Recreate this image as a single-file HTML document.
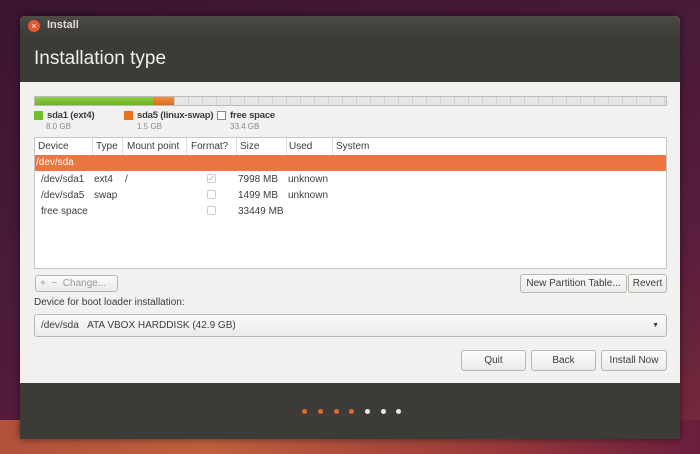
<!DOCTYPE html>
<html><head><style>
*{margin:0;padding:0;box-sizing:border-box}
body{width:700px;height:454px;overflow:hidden;position:relative;font-family:"Liberation Sans","DejaVu Sans",sans-serif;
background:linear-gradient(160deg,#3a1530 0%,#4a1a3a 40%,#5a1d3d 70%,#7a2b3a 100%);}
.bgb{position:absolute;left:0;top:420px;width:700px;height:34px;background:linear-gradient(90deg,#b2513a,#c0603e 30%,#9a3a3a 70%,#6a1e3e)}
.win{position:absolute;left:20px;top:16px;width:660px;height:423px;border-radius:5px 5px 0 0;overflow:hidden;background:#f2f1f0;box-shadow:0 0 8px rgba(0,0,0,.5)}
.hdr{position:absolute;left:0;top:0;width:660px;height:66px;background:linear-gradient(#4d4b46,#3c3b37 20px)}
.close{position:absolute;left:8px;top:4px;width:12px;height:12px;border-radius:50%;background:#e5592e;color:#fff;font-size:9px;line-height:12px;text-align:center}
.ttl{position:absolute;left:27px;top:3px;color:#dfdbd2;font-size:11px;font-weight:bold}
.h1{position:absolute;left:14px;top:32px;color:#eeeeec;font-size:19px}
.foot{position:absolute;left:0;top:367px;width:660px;height:56px;background:#3c3b37}
.dot{position:absolute;top:393px;width:5px;height:5px;border-radius:50%}
.t{position:absolute;font-size:10px;color:#3c3c3c;white-space:nowrap}
.lg{font-size:9.5px;letter-spacing:-0.2px}
.btn{position:absolute;border:1px solid #b8b6b2;border-radius:3px;background:linear-gradient(#fbfbfa,#ebeae8);font-size:10px;color:#3c3c3c;text-align:center}
</style></head><body>
<div class="bgb"></div>
<div class="win">
<div class="hdr"><div class="close">×</div><div class="ttl">Install</div><div class="h1">Installation type</div></div>
<div style="position:absolute;left:14px;top:80px;width:633px;height:10px;border:1px solid #bbb;background:repeating-linear-gradient(90deg,#e6e6e6 0 13px,#cfcfcf 13px 14px)"></div>
<div style="position:absolute;left:15px;top:81px;width:118px;height:8px;background:linear-gradient(#8fd046,#6cb22c)"></div>
<div style="position:absolute;left:133px;top:81px;width:21px;height:8px;background:linear-gradient(#f0913f,#dd6a1d)"></div>
<div style="position:absolute;left:14px;top:95px;width:9px;height:9px;background:#6fbf2a"></div>
<div class="t lg" style="left:27px;top:94px;font-weight:bold">sda1 (ext4)</div>
<div class="t" style="left:26px;top:106px;font-size:8px;color:#888">8.0 GB</div>
<div style="position:absolute;left:104px;top:95px;width:9px;height:9px;background:#e8711f"></div>
<div class="t lg" style="left:117px;top:94px;font-weight:bold">sda5 (linux-swap)</div>
<div class="t" style="left:117px;top:106px;font-size:8px;color:#888">1.5 GB</div>
<div style="position:absolute;left:197px;top:95px;width:9px;height:9px;border:1px solid #888;background:#fff"></div>
<div class="t lg" style="left:210px;top:94px;font-weight:bold">free space</div>
<div class="t" style="left:210px;top:106px;font-size:8px;color:#888">33.4 GB</div>
<div style="position:absolute;left:14px;top:121px;width:633px;height:132px;border:1px solid #c8c6c2;background:#fff"></div>
<div style="position:absolute;left:15px;top:139px;width:631px;height:16px;background:#ed7542"></div>
<div class="t" style="left:18px;top:125px">Device</div>
<div class="t" style="left:76px;top:125px">Type</div>
<div class="t" style="left:107px;top:125px">Mount point</div>
<div class="t" style="left:171px;top:125px">Format?</div>
<div class="t" style="left:220px;top:125px">Size</div>
<div class="t" style="left:269px;top:125px">Used</div>
<div class="t" style="left:316px;top:125px">System</div>
<div style="position:absolute;left:72px;top:122px;width:1px;height:17px;background:#ddd;box-shadow:30px 0 #ddd,94px 0 #ddd,144px 0 #ddd,194px 0 #ddd,240px 0 #ddd"></div>
<div class="t" style="left:16px;top:141px;color:#fff">/dev/sda</div>
<div class="t" style="left:21px;top:158px">/dev/sda1</div><div class="t" style="left:74px;top:158px">ext4</div><div class="t" style="left:105px;top:158px">/</div>
<div class="t" style="left:218px;top:158px">7998 MB</div><div class="t" style="left:268px;top:158px">unknown</div>
<div class="t" style="left:21px;top:174px">/dev/sda5</div><div class="t" style="left:74px;top:174px">swap</div>
<div class="t" style="left:218px;top:174px">1499 MB</div><div class="t" style="left:268px;top:174px">unknown</div>
<div class="t" style="left:21px;top:190px">free space</div><div class="t" style="left:218px;top:190px">33449 MB</div>
<div style="position:absolute;left:187px;top:158px;width:9px;height:9px;border:1px solid #ccc;border-radius:2px;font-size:8px;line-height:8px;color:#aaa;text-align:center">✓</div>
<div style="position:absolute;left:187px;top:174px;width:9px;height:9px;border:1px solid #ccc;border-radius:2px"></div>
<div style="position:absolute;left:187px;top:190px;width:9px;height:9px;border:1px solid #ccc;border-radius:2px"></div>
<div class="btn" style="left:15px;top:259px;width:83px;height:17px;color:#999;line-height:15px;text-align:left;padding-left:4px">+ &nbsp;− &nbsp;Change...</div>
<div class="btn" style="left:500px;top:258px;width:107px;height:19px;line-height:17px">New Partition Table...</div>
<div class="btn" style="left:608px;top:258px;width:39px;height:19px;line-height:17px">Revert</div>
<div class="t" style="left:14px;top:281px">Device for boot loader installation:</div>
<div class="btn" style="left:14px;top:298px;width:633px;height:23px;line-height:21px;text-align:left;padding-left:6px">/dev/sda &nbsp;&nbsp;ATA VBOX HARDDISK (42.9 GB)<span style="position:absolute;right:7px;font-size:7px">▼</span></div>
<div class="btn" style="left:441px;top:334px;width:65px;height:21px;line-height:19px">Quit</div>
<div class="btn" style="left:511px;top:334px;width:65px;height:21px;line-height:19px">Back</div>
<div class="btn" style="left:581px;top:334px;width:66px;height:21px;line-height:19px">Install Now</div>
<div class="foot"></div>
<div class="dot" style="left:282px;background:#e0693a"></div>
<div class="dot" style="left:298px;background:#e0693a"></div>
<div class="dot" style="left:314px;background:#e0693a"></div>
<div class="dot" style="left:329px;background:#e0693a"></div>
<div class="dot" style="left:345px;background:#e8e8e8"></div>
<div class="dot" style="left:361px;background:#e8e8e8"></div>
<div class="dot" style="left:376px;background:#e8e8e8"></div>
</div>
</body></html>
